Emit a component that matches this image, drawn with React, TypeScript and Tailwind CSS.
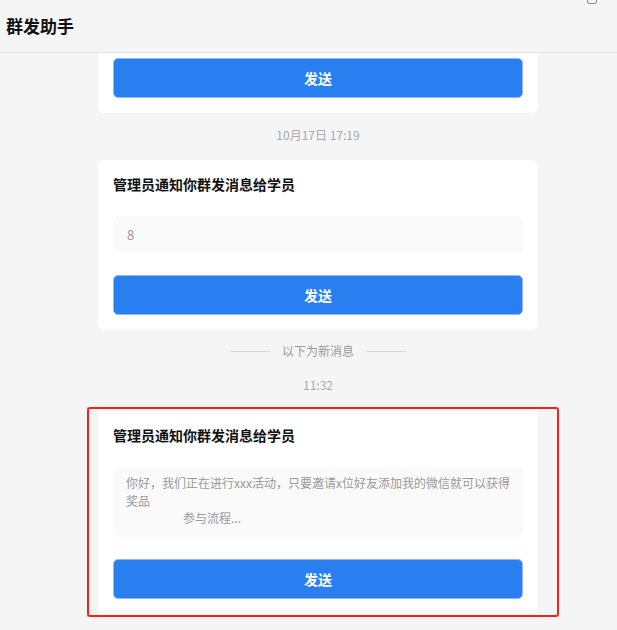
const FONT = '[font-family:"Noto_Sans_CJK_SC","Noto_Sans",sans-serif]';

function SendButton() {
  return (
    <button
      type="button"
      className="flex h-[40px] w-full items-center justify-center rounded-[5px] border border-[#8fb8f5] bg-[#2a7ff0] text-[14px] font-bold text-white"
    >
      发送
    </button>
  );
}

function Stamp({ text, className }: { text: string; className: string }) {
  return (
    <div className={`flex h-[20px] items-center justify-center text-[12px] text-[#a6a9ae] ${className}`}>
      {text}
    </div>
  );
}

function NoticeCard({ children, boxClass }: { children: React.ReactNode; boxClass: string }) {
  return (
    <div className="rounded-[6px] bg-white px-[15px] pt-[14px] pb-[15px]">
      <h3 className="h-[20px] text-[14px] leading-[20px] font-bold text-[#111]">管理员通知你群发消息给学员</h3>
      <div className={`mt-[22px] rounded-[6px] bg-[#fafafa] text-[12px] text-[#999] ${boxClass}`}>{children}</div>
      <div className="mt-[22px]">
        <SendButton />
      </div>
    </div>
  );
}

export default function App() {
  return (
    <div className={`relative min-h-screen overflow-hidden bg-[#f5f5f5] ${FONT}`}>
      <header className="flex h-[53px] items-center border-b border-[#e4e4e4] pl-[6px] pb-[1px]">
        <h1 className="text-[17px] font-bold text-[#111]">群发助手</h1>
      </header>
      <span className="absolute top-[-6px] left-[587px] h-[10px] w-[10px] rounded-[2px] border border-[#8a8a8a]" />

      <main className="ml-[98px] w-[440px]">
        <div className="rounded-b-[6px] bg-white px-[15px] pt-[5px] pb-[15px]">
          <SendButton />
        </div>

        <Stamp text="10月17日 17:19" className="mt-[12px] mb-[15px]" />

        <NoticeCard boxClass="flex h-[37px] items-center px-[14px] text-[13px] text-[#8c8c8c]">8</NoticeCard>

        <div className="mt-[11px] flex h-[20px] items-center justify-center gap-[12px] text-[12px] text-[#9a9a9a]">
          <span className="h-px w-[40px] bg-[#d6d6d6]" />
          <span>以下为新消息</span>
          <span className="h-px w-[40px] bg-[#d6d6d6]" />
        </div>

        <Stamp text="11:32" className="mt-[14px]" />

        <div className="relative mt-[16px]">
          <NoticeCard boxClass="h-[70px] px-[13px] pt-[7px] leading-[17.5px]">
            <div className="whitespace-nowrap">你好，我们正在进行xxx活动，只要邀请x位好友添加我的微信就可以获得</div>
            <div>奖品</div>
            <div className="pl-[57px]">参与流程...</div>
          </NoticeCard>
          <div className="pointer-events-none absolute top-[-4px] right-[-21px] bottom-[-3px] left-[-11px] rounded-[3px] border-2 border-[#f5221b]" />
        </div>
      </main>
    </div>
  );
}
